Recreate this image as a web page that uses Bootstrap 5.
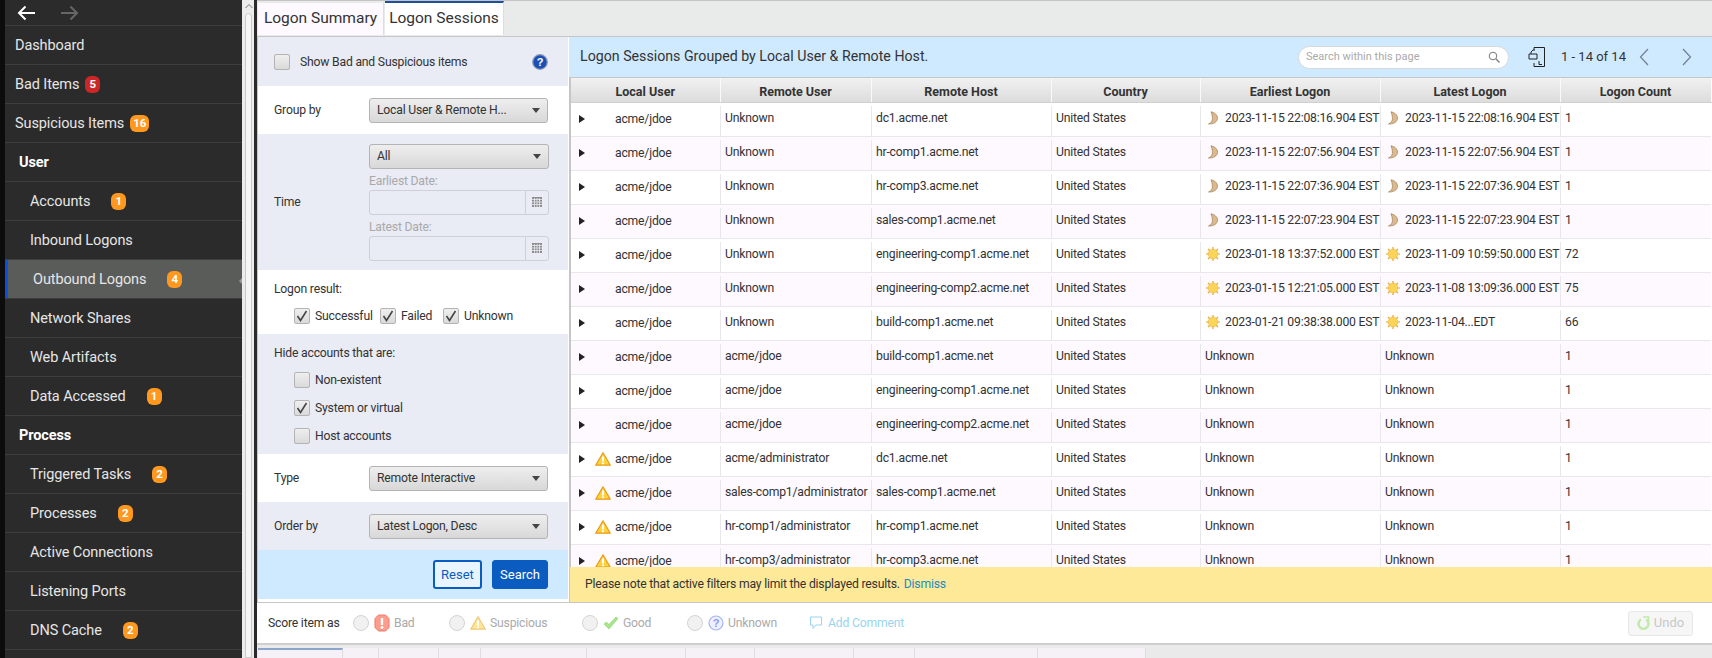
<!DOCTYPE html>
<html lang="en">
<head>
<meta charset="UTF-8">
<meta name="viewport" content="width=device-width, initial-scale=1.0">
<title>Logon Sessions</title>
<link href="https://cdn.jsdelivr.net/npm/bootstrap@5.3.0/dist/css/bootstrap.min.css" rel="stylesheet">
<style>
html, body { height: 658px; overflow: hidden; }
body { font-family: Roboto, "Noto Sans", sans-serif; font-size: 12.2px; letter-spacing: -.2px; color: #333; background: #fff; display: flex; }

/* left nav */
.side-wrap { width: 257px; flex: none; display: flex; background: #2b2b2b; border-left: 5px solid #0c0c0c; }
.side-nav { width: 237px; flex: none; overflow: hidden; color: #e6e6e6; }
.side-top { height: 25px; display: flex; align-items: center; gap: 24px; padding-left: 12px; }
.side-link { display: flex; align-items: center; height: 39px; border-top: 1px solid #3d3d3d; color: #e6e6e6; text-decoration: none; padding: 1px 0 0 10px; font-size: 14.5px; letter-spacing: -.1px; }
.side-link.sub { padding-left: 25px; }
.side-link.grp { padding-left: 14px; font-weight: 700; color: #fff; }
.side-link.on { background: #5a5c5a; border-left: 3px solid #0b50dc; padding-left: 25px; position: relative; }
.side-link.on::after { content: ""; position: absolute; right: 0; top: 18px; border: 3px solid transparent; border-right-color: #999; }
.cnt { display: inline-block; min-width: 15px; height: 17px; line-height: 17px; padding: 0 3px; border-radius: 6px; background: #ff981f; color: #fff; font-size: 11.5px; font-weight: 700; letter-spacing: 0; text-align: center; margin-left: 6px; }
.cnt.red { background: #cc2727; }
.sub .cnt { margin-left: 21px; }
.side-scroll { width: 15px; flex: none; background: #ececec; border-right: 3px solid #2a2a2a; position: relative; }
.side-up { position: absolute; left: 3px; top: 3px; display: block; }
.side-thumb { position: absolute; left: 3px; right: 2px; top: 13px; bottom: 0; background: #f6f6f6; border: 1px solid #c9c9c9; border-radius: 4px 4px 0 0; }

/* main */
.main-col { flex: 1; min-width: 0; display: flex; flex-direction: column; height: 658px; }
.tab-strip { height: 37px; flex: none; display: flex; background: #e9ebeb; border-top: 1px solid #c4c4c4; border-bottom: 1px solid #c6c6c6; padding-left: 1px; }
.tab-it { font-size: 15.5px; letter-spacing: 0; color: #333; display: flex; align-items: center; justify-content: center; margin-top: 2px; margin-bottom: 1px; }
.tab-sum { width: 126px; background: #fdf9fe; border-right: 1px solid #ddd; }
.tab-ses { width: 119px; background: #fff; border-top: 2px solid #1c4f9c; border-right: 1px solid #ddd; margin-top: 0; margin-left: 1px; }
.work { flex: 0 0 566px; display: flex; border-bottom: 1px solid #c6c6c6; min-height: 0; }

/* filters */
.flt { width: 312px; flex: none; border-left: 1px solid #c6c6c6; display: flex; flex-direction: column; border-right: 1px solid #fff; }
.band { padding: 0 20px 0 16px; display: flex; align-items: center; flex: none; }
.band.tint { background: #e9ebf5; }
.b-49 { height: 49px; }
.b-48 { height: 48px; }
.b-time { height: 136px; }
.flt-lbl { width: 95px; flex: none; }
.flt-sel.form-select { width: 180px; height: 25px; min-height: 0; padding: 0 20px 0 7px; font-size: 12.2px; letter-spacing: -.2px; color: #333; border: 1px solid #b4b4b4; border-radius: 3px; background-color: #e4e4e4; background-image: url("data:image/svg+xml,%3Csvg xmlns='http://www.w3.org/2000/svg' width='8' height='5'%3E%3Cpath d='M0 0h8L4 5z' fill='%23444'/%3E%3C/svg%3E"), linear-gradient(#eeeeee, #d8d8d8); background-repeat: no-repeat; background-position: right 7px center, 0 0; background-size: 8px 5px, auto; }
.date-lbl { color: #a9a9a9; line-height: 18px; margin-top: 3px; }
.date-grp { width: 180px; height: 25px; }
.date-grp .form-control { height: 25px; min-height: 0; padding: 0; background: #e9ebf5; border: 1px solid #cfcfd8; border-radius: 3px 0 0 3px; }
.date-grp .input-group-text { width: 24px; padding: 0; justify-content: center; background: #e9ebf5; border: 1px solid #cfcfd8; border-radius: 0 3px 3px 0; }
.chk.form-check-input { width: 16px; height: 16px; margin: 0; flex: none; border: 1px solid #b4b4b4; border-radius: 2px; background-color: #e2e2e2; background-image: linear-gradient(#efefef, #dadada); }
.chk.form-check-input:checked { background-color: #e2e2e2; border-color: #b4b4b4; background-image: url("data:image/svg+xml,%3Csvg xmlns='http://www.w3.org/2000/svg' viewBox='0 0 16 16'%3E%3Cpath d='M3.5 8l3 4.5L12.5 3' fill='none' stroke='%23444' stroke-width='1.6'/%3E%3C/svg%3E"), linear-gradient(#efefef, #dadada); background-size: 16px 16px, auto; }
.chk-row { display: flex; align-items: center; gap: 5px; line-height: 16px; margin: 0; }
.chk-wide { gap: 10px; }
.b-res { height: 64px; display: block; padding-top: 10px; }
.b-hide { height: 120px; display: block; padding-top: 10px; }
.band-head { line-height: 18px; }
.res-row { display: flex; margin: 10px 0 0 20px; }
.res-1 { width: 86px; }
.res-2 { width: 63px; }
.hide-list { display: flex; flex-direction: column; gap: 12px; margin: 10px 0 0 20px; }
.b-act { height: 49px; background: #cfeaff; justify-content: flex-end; gap: 10px; }
.btn-reset.btn, .btn-find.btn { height: 29px; padding: 0; font-size: 13px; border-radius: 3px; }
.btn-reset.btn { width: 49px; color: #0a5cc0; background: #e8f4ff; border: 2px solid #0a5cc0; }
.btn-find.btn { width: 56px; color: #fff; background: #0a5cc0; border: 1px solid #0a5cc0; }

/* results */
.res-pane { flex: 1; min-width: 0; display: flex; flex-direction: column; }
.res-bar { height: 40px; flex: none; background: #cfeaff; display: flex; align-items: center; padding-left: 11px; font-size: 14.2px; letter-spacing: 0; }
.res-find { width: 211px; height: 23px; margin-left: auto; background: #fff; border: 1px solid #d8d8d8; border-radius: 12px; display: flex; align-items: center; padding: 0 8px 0 7px; justify-content: space-between; color: #aaa; font-size: 11px; }
.res-export { margin-left: 19px; display: flex; }
.res-count { margin-left: 15px; width: 78px; white-space: nowrap; font-size: 13px; }
.res-prev { width: 43px; display: flex; }
.res-next { width: 30px; display: flex; }
.grid-wrap { flex: 1; min-height: 0; overflow: hidden; border-left: 2px solid #c6c6c6; border-top: 1px solid #c6c6c6; }
.grid.table { table-layout: fixed; width: 1140px; margin: 0; font-size: 12.2px; --bs-table-bg: transparent; }
.grid th { height: 24px; padding: 0; text-align: center; font-weight: 700; font-size: 12.5px; letter-spacing: 0; color: #333; background: linear-gradient(#f1f1f1, #dcdcdc); border-bottom: 1px solid #d0d0d0; border-right: 1px solid #fafafa; }
.grid td { height: 34px; padding: 3px 0 0 0; border-bottom: 1px solid #e8e8ec; color: #333; vertical-align: top; white-space: nowrap; overflow: hidden; }
.grid tr:nth-child(even) td { background: #fdf9fe; }
.cw-a { width: 149px; } .cw-b { width: 151px; } .cw-c { width: 180px; } .cw-d { width: 149px; }
.cw-e, .cw-f { width: 180px; } .cw-g { width: 151px; }
.cell-in { height: 30px; line-height: 24px; padding-left: 4px; border-left: 1px solid #e8e8ec; display: flex; align-items: flex-start; }
.cell-first { height: 30px; line-height: 26px; display: flex; align-items: flex-start; padding-left: 8px; }
.cell-first .tri { width: 6px; height: 8px; margin-top: 9px; flex: none; }
.tag-slot { width: 17px; margin: 6px 3px 0 10px; height: 14px; flex: none; display: flex; }
.cell-in svg { margin-top: 5px; flex: none; }
.cell-date { padding-left: 5px; gap: 5px; }
.note-bar { height: 35px; flex: none; background: #fde998; border-left: 1px solid #c6c6c6; padding-left: 15px; display: flex; align-items: center; gap: 4px; }
.note-bar a { color: #1a8cc0; text-decoration: none; }

/* score row */
.score-row { flex: 0 0 40px; display: flex; align-items: center; padding-left: 11px; border-bottom: 2px solid #cfcfcf; box-sizing: content-box; }
.score-lbl { width: 85px; flex: none; }
.score-opt { display: flex; align-items: center; gap: 5px; color: #aaa; flex: none; margin: 0; }
.s-bad { width: 96px; } .s-sus { width: 133px; } .s-good { width: 105px; } .s-unk { width: 122px; }
.score-opt span { margin-left: -1px; }
.rad.form-check-input { width: 16px; height: 16px; margin: 0; flex: none; border: 1px solid #d4d4d4; background-color: #f1f1f1; }
.score-note { color: #98d4f0; display: flex; align-items: center; gap: 5px; }
.undo.btn { margin-left: auto; margin-right: 19px; width: 65px; height: 25px; padding: 0; display: flex; align-items: center; justify-content: center; gap: 4px; font-size: 13px; color: #aaa; background: #f2f2f2; border: 1px solid #ddd; border-radius: 3px; }
.view-strip { flex: 1; display: flex; background: #eaeaea; padding-top: 3px; padding-left: 1px; }
.view-strip div { background: #f5f1f7; border-right: 1px solid #ddd; }
.vt-on { width: 85px; border-top: 2px solid #8aa6cc; }
.v1 { width: 36px; } .v2 { width: 60px; } .v3 { width: 42px; } .v4 { width: 106px; } .v5 { width: 99px; }
.v6 { width: 69px; } .v7 { width: 99px; } .v8 { width: 61px; } .v9 { width: 123px; } .v10 { width: 108px; }
</style>
</head>
<body>
<svg width="0" height="0" class="position-absolute">
  <defs>
    <symbol id="i-moon" viewBox="0 0 14 14"><path d="M5 .8c3 .6 6.500 2.700 6.500 6.500 0 3.700-4.200 6-9 5.700 2.800-1 4.300-3.500 3.900-6.500C6.200 4.500 5.800 2.500 5 .8z" fill="#dcb98e" stroke="#9c7c55" stroke-width=".7"/></symbol>
    <symbol id="i-sun" viewBox="0 0 14 14"><g stroke="#e6a52a" stroke-width="1.200"><path d="M7 0v14M0 7h14M2 2l10 10M12 2L2 12"/></g><circle cx="7" cy="7" r="4.800" fill="#fbd55a" stroke="#eeb43a" stroke-width=".6"/></symbol>
    <symbol id="i-warn" viewBox="0 0 16 14"><path d="M8 .8L15.300 13.200H.7z" fill="#fdd23c" stroke="#e89a18" stroke-width="1.200" stroke-linejoin="round"/><path d="M8 4.500v5" stroke="#fff" stroke-width="2"/><circle cx="8" cy="11.300" r="1.100" fill="#fff"/></symbol>
    <symbol id="i-cal" viewBox="0 0 10 10"><path d="M0 0h10v10H0z" fill="#8e8e8e"/><path d="M0 2.500h10M0 5h10M0 7.500h10M2.500 1v9M5 1v9M7.500 1v9" stroke="#e9ebf5" stroke-width=".8"/></symbol>
  </defs>
</svg>

<div class="side-wrap">
  <nav class="side-nav">
    <div class="side-top">
      <svg width="19" height="16" viewBox="0 0 19 16"><path d="M18 8H2M8.500 1.500L2 8l6.500 6.500" fill="none" stroke="#fff" stroke-width="2"/></svg>
      <svg width="19" height="16" viewBox="0 0 19 16"><path d="M1 8h16M10.500 1.500L17 8l-6.500 6.500" fill="none" stroke="#666" stroke-width="2"/></svg>
    </div>
    <a class="side-link" href="#">Dashboard</a>
    <a class="side-link" href="#">Bad Items<span class="cnt red">5</span></a>
    <a class="side-link" href="#">Suspicious Items<span class="cnt">16</span></a>
    <a class="side-link grp" href="#">User</a>
    <a class="side-link sub" href="#">Accounts<span class="cnt">1</span></a>
    <a class="side-link sub" href="#">Inbound Logons</a>
    <a class="side-link sub on" href="#">Outbound Logons<span class="cnt">4</span></a>
    <a class="side-link sub" href="#">Network Shares</a>
    <a class="side-link sub" href="#">Web Artifacts</a>
    <a class="side-link sub" href="#">Data Accessed<span class="cnt">1</span></a>
    <a class="side-link grp" href="#">Process</a>
    <a class="side-link sub" href="#">Triggered Tasks<span class="cnt">2</span></a>
    <a class="side-link sub" href="#">Processes<span class="cnt">2</span></a>
    <a class="side-link sub" href="#">Active Connections</a>
    <a class="side-link sub" href="#">Listening Ports</a>
    <a class="side-link sub" href="#">DNS Cache<span class="cnt">2</span></a>
    <a class="side-link sub" href="#"></a>
  </nav>
  <div class="side-scroll">
    <svg class="side-up" width="8" height="6" viewBox="0 0 8 6"><path d="M.5 5L4 1.500 7.500 5" fill="none" stroke="#777"/></svg>
    <div class="side-thumb"></div>
  </div>
</div>

<div class="main-col">
  <div class="tab-strip">
    <div class="tab-it tab-sum">Logon Summary</div>
    <div class="tab-it tab-ses">Logon Sessions</div>
  </div>

  <div class="work">
    <div class="flt">
      <div class="band tint b-49 justify-content-between">
        <label class="chk-row chk-wide"><input type="checkbox" class="form-check-input chk"><span>Show Bad and Suspicious items</span></label>
        <svg width="16" height="16" viewBox="0 0 16 16"><circle cx="8" cy="8" r="7.300" fill="#1c4fb4" stroke="#8b9bb8" stroke-width="1.200"/><text x="8" y="12" text-anchor="middle" font-size="11" font-weight="700" fill="#fff" font-family="Liberation Sans">?</text></svg>
      </div>
      <div class="band b-48">
        <span class="flt-lbl">Group by</span>
        <select class="form-select flt-sel"><option>Local User &amp; Remote H...</option></select>
      </div>
      <div class="band tint b-time">
        <span class="flt-lbl">Time</span>
        <div>
          <select class="form-select flt-sel"><option>All</option></select>
          <div class="date-lbl">Earliest Date:</div>
          <div class="input-group date-grp"><input class="form-control" disabled><span class="input-group-text"><svg width="10" height="10"><use href="#i-cal"/></svg></span></div>
          <div class="date-lbl">Latest Date:</div>
          <div class="input-group date-grp"><input class="form-control" disabled><span class="input-group-text"><svg width="10" height="10"><use href="#i-cal"/></svg></span></div>
        </div>
      </div>
      <div class="band b-res">
        <div class="band-head">Logon result:</div>
        <div class="res-row">
          <label class="chk-row res-1"><input type="checkbox" class="form-check-input chk" checked>Successful</label>
          <label class="chk-row res-2"><input type="checkbox" class="form-check-input chk" checked>Failed</label>
          <label class="chk-row"><input type="checkbox" class="form-check-input chk" checked>Unknown</label>
        </div>
      </div>
      <div class="band tint b-hide">
        <div class="band-head">Hide accounts that are:</div>
        <div class="hide-list">
          <label class="chk-row"><input type="checkbox" class="form-check-input chk">Non-existent</label>
          <label class="chk-row"><input type="checkbox" class="form-check-input chk" checked>System or virtual</label>
          <label class="chk-row"><input type="checkbox" class="form-check-input chk">Host accounts</label>
        </div>
      </div>
      <div class="band b-48">
        <span class="flt-lbl">Type</span>
        <select class="form-select flt-sel"><option>Remote Interactive</option></select>
      </div>
      <div class="band tint b-48">
        <span class="flt-lbl">Order by</span>
        <select class="form-select flt-sel"><option>Latest Logon, Desc</option></select>
      </div>
      <div class="band b-act">
        <button class="btn btn-reset">Reset</button>
        <button class="btn btn-find">Search</button>
      </div>
    </div>

    <div class="res-pane">
      <div class="res-bar">
        <span>Logon Sessions Grouped by Local User &amp; Remote Host.</span>
        <div class="res-find">
          <span>Search within this page</span>
          <svg width="12" height="12" viewBox="0 0 12 12"><circle cx="5" cy="5" r="3.800" fill="none" stroke="#777"/><path d="M8 8l3.500 3.500" stroke="#777" stroke-width="1.200"/></svg>
        </div>
        <svg class="res-export" width="18" height="22" viewBox="0 0 18 22"><path d="M6 4V1.500h10.500v19H6V17" fill="none" stroke="#222"/><path d="M1 8h8v5H1z" fill="#cfeaff" stroke="#222"/><path d="M3 8V6l2-2h2" fill="none" stroke="#222"/><path d="M11 15v3.500h3" fill="none" stroke="#222"/></svg>
        <span class="res-count">1 - 14 of 14</span>
        <span class="res-prev"><svg width="10" height="18" viewBox="0 0 10 18"><path d="M9 1L1.500 9 9 17" fill="none" stroke="#6f7f90" stroke-width="1.200"/></svg></span>
        <span class="res-next"><svg width="10" height="18" viewBox="0 0 10 18"><path d="M1 1l7.500 8L1 17" fill="none" stroke="#6f7f90" stroke-width="1.200"/></svg></span>
      </div>
      <div class="grid-wrap">
        <table class="table grid">
          <colgroup><col class="cw-a"><col class="cw-b"><col class="cw-c"><col class="cw-d"><col class="cw-e"><col class="cw-f"><col class="cw-g"></colgroup>
          <thead><tr><th>Local User</th><th>Remote User</th><th>Remote Host</th><th>Country</th><th>Earliest Logon</th><th>Latest Logon</th><th>Logon Count</th></tr></thead>
          <tbody id="gridBody"></tbody>
        </table>
      </div>
      <div class="note-bar">Please note that active filters may limit the displayed results. <a href="#">Dismiss</a></div>
    </div>
  </div>

  <div class="score-row">
    <span class="score-lbl">Score item as</span>
    <label class="score-opt s-bad"><input type="radio" class="form-check-input rad" name="score">
      <svg width="16" height="18" viewBox="0 0 16 18"><path d="M4.500 1h7L15 4.500v9L11.500 17h-7L1 13.500v-9z" fill="#fb9c8c" stroke="#ee7b6c"/><path d="M8 4v7" stroke="#fff" stroke-width="2.400"/><circle cx="8" cy="13.500" r="1.400" fill="#fff"/></svg>
      <span>Bad</span></label>
    <label class="score-opt s-sus"><input type="radio" class="form-check-input rad" name="score">
      <svg width="16" height="14"><use href="#i-warn" opacity=".55"/></svg>
      <span>Suspicious</span></label>
    <label class="score-opt s-good"><input type="radio" class="form-check-input rad" name="score">
      <svg width="16" height="14" viewBox="0 0 16 14"><path d="M1 8l2.500-2L6 8.500 13 1l2 1.500L6 13z" fill="#a6e58a" stroke="#8ad06c" stroke-width=".6"/></svg>
      <span>Good</span></label>
    <label class="score-opt s-unk"><input type="radio" class="form-check-input rad" name="score">
      <svg width="16" height="16" viewBox="0 0 16 16"><circle cx="8" cy="8" r="7" fill="#eef0ff" stroke="#a6b4f0" stroke-width="1.200"/><text x="8" y="12" text-anchor="middle" font-size="11" font-weight="700" fill="#8c9cec" font-family="Liberation Sans">?</text></svg>
      <span>Unknown</span></label>
    <span class="score-note">
      <svg width="14" height="14" viewBox="0 0 14 14"><path d="M1.500 1h11v8H7L4 12.500V9H1.500z" fill="none" stroke="#98d4f0"/></svg>
      Add Comment</span>
    <button class="btn undo" disabled>
      <svg width="13" height="15" viewBox="0 0 13 15"><path d="M4 3.500a5 5 0 1 0 5 0" fill="none" stroke="#9de07c" stroke-width="2.400"/><path d="M6 1h5.500v5" fill="none" stroke="#9de07c" stroke-width="1.600"/></svg>
      Undo</button>
  </div>
  <div class="view-strip">
    <div class="vt-on"></div><div class="v1"></div><div class="v2"></div><div class="v3"></div><div class="v4"></div><div class="v5"></div><div class="v6"></div><div class="v7"></div><div class="v8"></div><div class="v9"></div><div class="v10"></div>
  </div>
</div>

<script>
    const moon = 'i-moon', sun = 'i-sun';
    const rows = [
        [0, 'Unknown', 'dc1.acme.net', moon, '2023-11-15 22:08:16.904 EST', moon, '2023-11-15 22:08:16.904 EST', '1'],
        [0, 'Unknown', 'hr-comp1.acme.net', moon, '2023-11-15 22:07:56.904 EST', moon, '2023-11-15 22:07:56.904 EST', '1'],
        [0, 'Unknown', 'hr-comp3.acme.net', moon, '2023-11-15 22:07:36.904 EST', moon, '2023-11-15 22:07:36.904 EST', '1'],
        [0, 'Unknown', 'sales-comp1.acme.net', moon, '2023-11-15 22:07:23.904 EST', moon, '2023-11-15 22:07:23.904 EST', '1'],
        [0, 'Unknown', 'engineering-comp1.acme.net', sun, '2023-01-18 13:37:52.000 EST', sun, '2023-11-09 10:59:50.000 EST', '72'],
        [0, 'Unknown', 'engineering-comp2.acme.net', sun, '2023-01-15 12:21:05.000 EST', sun, '2023-11-08 13:09:36.000 EST', '75'],
        [0, 'Unknown', 'build-comp1.acme.net', sun, '2023-01-21 09:38:38.000 EST', sun, '2023-11-04...EDT', '66'],
        [0, 'acme/jdoe', 'build-comp1.acme.net', '', 'Unknown', '', 'Unknown', '1'],
        [0, 'acme/jdoe', 'engineering-comp1.acme.net', '', 'Unknown', '', 'Unknown', '1'],
        [0, 'acme/jdoe', 'engineering-comp2.acme.net', '', 'Unknown', '', 'Unknown', '1'],
        [1, 'acme/administrator', 'dc1.acme.net', '', 'Unknown', '', 'Unknown', '1'],
        [1, 'sales-comp1/administrator', 'sales-comp1.acme.net', '', 'Unknown', '', 'Unknown', '1'],
        [1, 'hr-comp1/administrator', 'hr-comp1.acme.net', '', 'Unknown', '', 'Unknown', '1'],
        [1, 'hr-comp3/administrator', 'hr-comp3.acme.net', '', 'Unknown', '', 'Unknown', '1']
    ];

    function dateCell(icon, text) {
        if (!icon) return `<td><div class="cell-in">${text}</div></td>`;
        return `<td><div class="cell-in cell-date"><svg width="14" height="14"><use href="#${icon}"/></svg>${text}</div></td>`;
    }

    document.getElementById('gridBody').innerHTML = rows.map(r => `<tr>
        <td><div class="cell-first">
            <svg class="tri" viewBox="0 0 6 8"><path d="M0 0l6 4-6 4z" fill="#222"/></svg>
            <span class="tag-slot">${r[0] ? '<svg width="16" height="14"><use href="#i-warn"/></svg>' : ''}</span>acme/jdoe
        </div></td>
        <td><div class="cell-in">${r[1]}</div></td>
        <td><div class="cell-in">${r[2]}</div></td>
        <td><div class="cell-in">United States</div></td>
        ${dateCell(r[3], r[4])}
        ${dateCell(r[5], r[6])}
        <td><div class="cell-in">${r[7]}</div></td>
    </tr>`).join('');
</script>
<script src="https://cdn.jsdelivr.net/npm/bootstrap@5.3.0/dist/js/bootstrap.bundle.min.js"></script>
</body>
</html>
